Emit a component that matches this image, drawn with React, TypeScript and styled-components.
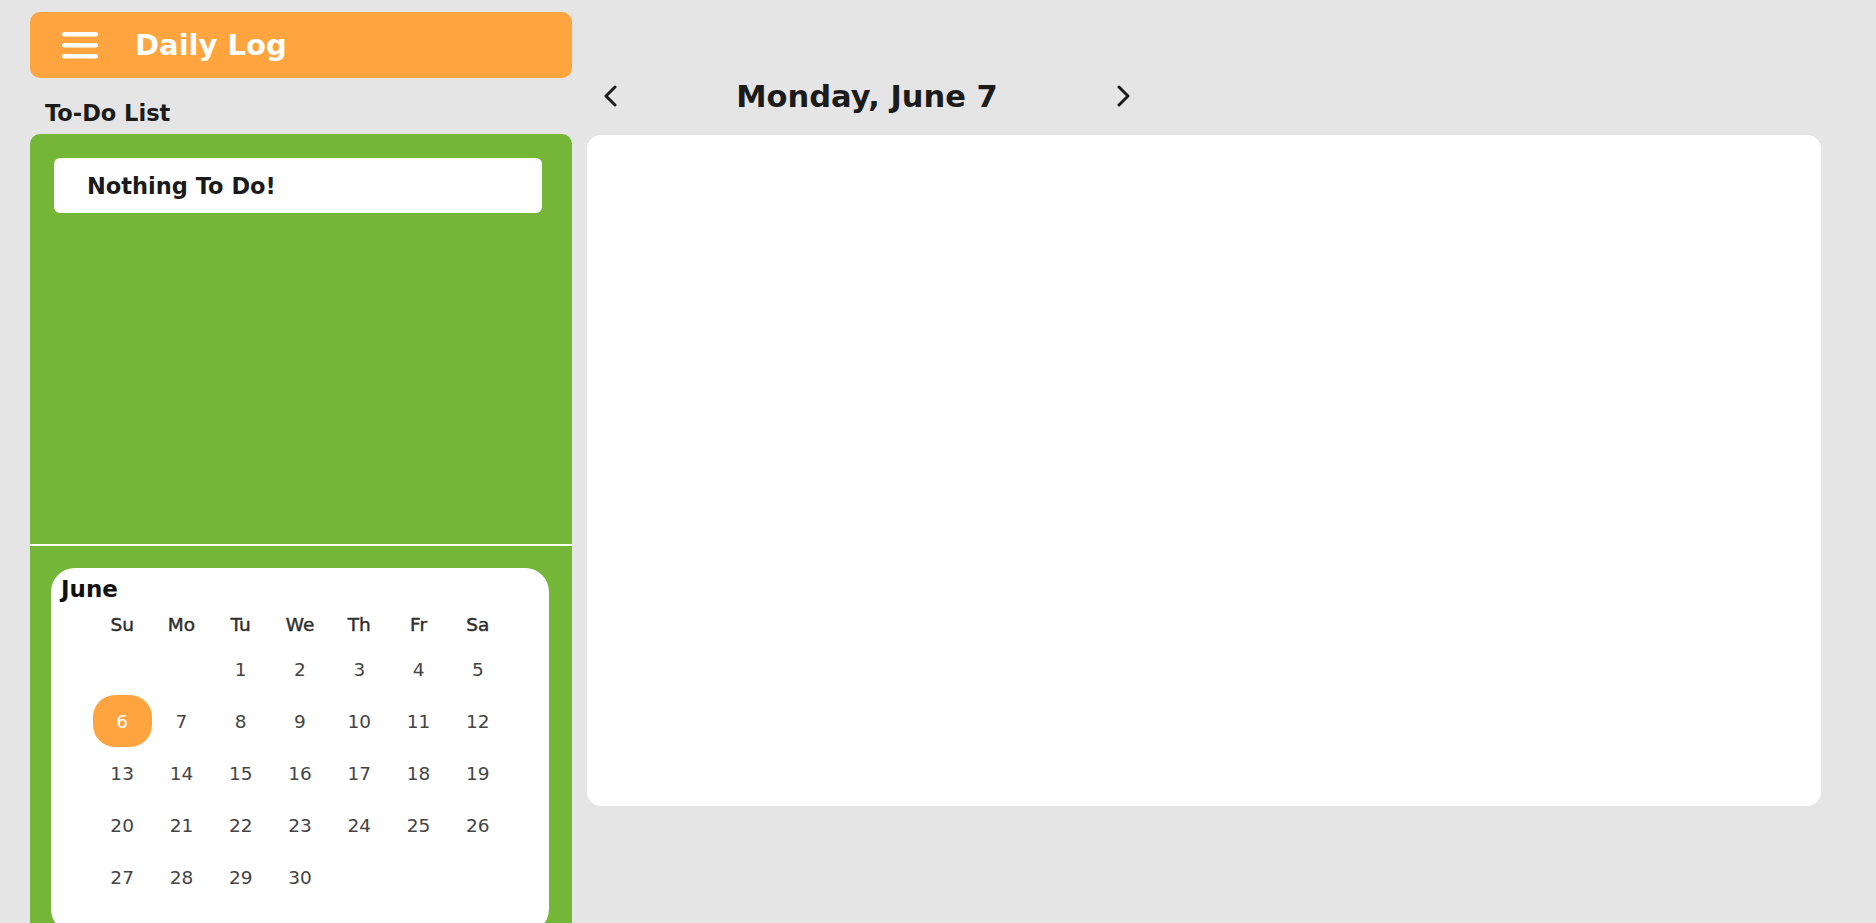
import React from "react";
import styled, { createGlobalStyle } from "styled-components";

const GlobalStyle = createGlobalStyle`
  html, body {
    margin: 0;
    padding: 0;
    background: #e5e5e5;
    font-family: "DejaVu Sans", "Liberation Sans", sans-serif;
    color: #1b1b1b;
    overflow: hidden;
  }
  * { box-sizing: border-box; }
`;

const ORANGE = "#ffa43f";
const GREEN = "#73b638";

const Page = styled.div`
  display: flex;
  gap: 15px;
  height: 100vh;
  padding: 12px 55px 0 30px;
  overflow: hidden;
`;

const LeftColumn = styled.aside`
  width: 542px;
  flex-shrink: 0;
  display: flex;
  flex-direction: column;
`;

const Header = styled.header`
  flex-shrink: 0;
  height: 66px;
  background: ${ORANGE};
  border-radius: 10px;
  display: flex;
  align-items: center;
  padding-left: 32px;
  gap: 37px;
`;

const MenuButton = styled.button`
  border: none;
  background: transparent;
  padding: 0;
  display: flex;
  cursor: pointer;
`;

const AppTitle = styled.h1`
  margin: 0;
  color: #fff;
  font-size: 29px;
  font-weight: 700;
`;

const SectionLabel = styled.h2`
  flex-shrink: 0;
  margin: 0;
  height: 56px;
  padding: 21px 0 0 15px;
  font-size: 22.5px;
  line-height: 28px;
  font-weight: 700;
  color: #1b1b1b;
`;

const GreenPanel = styled.section`
  flex-shrink: 0;
  background: ${GREEN};
  border-radius: 10px 10px 0 0;
  display: flex;
  flex-direction: column;
`;

const TodoArea = styled.div`
  height: 410px;
  padding: 24px 30px 0 24px;
`;

const TodoCard = styled.div`
  height: 55px;
  background: #fff;
  border-radius: 6px;
  display: flex;
  align-items: center;
  padding-left: 33px;
  font-size: 22.5px;
  font-weight: 700;
  color: #1b1b1b;
`;

const Divider = styled.hr`
  margin: 0;
  border: none;
  height: 2px;
  background: #fff;
`;

const CalendarArea = styled.div`
  padding: 22px 23px 20px 21px;
`;

const CalendarCard = styled.div`
  background: #fff;
  border-radius: 24px;
  padding: 6px 0 30px;
`;

const MonthTitle = styled.h3`
  margin: 0 0 1px;
  padding-left: 10px;
  font-size: 23px;
  line-height: 30px;
  font-weight: 700;
  color: #111;
`;

const Grid = styled.div`
  width: 415px;
  margin: 0 auto;
  display: grid;
  grid-template-columns: repeat(7, 1fr);
`;

const WeekDay = styled.div`
  height: 38px;
  display: flex;
  align-items: center;
  justify-content: center;
  font-size: 18.5px;
  font-weight: 400;
  color: #2e2e2e;
  -webkit-text-stroke: 0.45px #2e2e2e;
`;

const Day = styled.div<{ $selected?: boolean }>`
  height: 52px;
  display: flex;
  align-items: center;
  justify-content: center;
  font-size: 18.5px;
  font-weight: 400;
  color: ${(p) => (p.$selected ? "#fff" : "#444")};
  background: ${(p) => (p.$selected ? ORANGE : "transparent")};
  border-radius: 22px;
`;

const RightColumn = styled.main`
  width: 1234px;
  flex-shrink: 0;
  padding-top: 56px;
  display: flex;
  flex-direction: column;
  gap: 11px;
`;

const DateNav = styled.nav`
  width: 560px;
  height: 56px;
  flex-shrink: 0;
  display: flex;
  align-items: center;
  justify-content: space-between;
`;

const NavButton = styled.button`
  width: 48px;
  height: 48px;
  border: none;
  background: transparent;
  padding: 0;
  display: flex;
  align-items: center;
  justify-content: center;
  cursor: pointer;
  color: #1b1b1b;
`;

const DateTitle = styled.h2`
  margin: 0;
  font-size: 30.5px;
  font-weight: 700;
  color: #1b1b1b;
`;

const LogPanel = styled.div`
  height: 671px;
  flex-shrink: 0;
  background: #fff;
  border-radius: 14px;
`;

const Hamburger = () => (
  <svg width="36" height="27" viewBox="0 0 36 27">
    <rect x="0" y="0" width="36" height="4.6" rx="2.3" fill="#fff" />
    <rect x="0" y="11" width="36" height="4.6" rx="2.3" fill="#fff" />
    <rect x="0" y="22" width="36" height="4.6" rx="2.3" fill="#fff" />
  </svg>
);

const Chevron = ({ dir }: { dir: "left" | "right" }) => (
  <svg width="16" height="22" viewBox="0 0 16 22">
    <polyline
      points={dir === "left" ? "12,2 3,11 12,20" : "4,2 13,11 4,20"}
      fill="none"
      stroke="#1b1b1b"
      strokeWidth="3"
      strokeLinecap="round"
      strokeLinejoin="round"
    />
  </svg>
);

const weekDays = ["Su", "Mo", "Tu", "We", "Th", "Fr", "Sa"];
const leading = 2;
const daysInMonth = 30;
const selectedDay = 6;

export default function App() {
  const cells: (number | null)[] = [
    ...Array.from({ length: leading }, () => null),
    ...Array.from({ length: daysInMonth }, (_, i) => i + 1),
  ];
  return (
    <>
      <GlobalStyle />
      <Page>
        <LeftColumn>
          <Header>
            <MenuButton aria-label="menu">
              <Hamburger />
            </MenuButton>
            <AppTitle>Daily Log</AppTitle>
          </Header>
          <SectionLabel>To-Do List</SectionLabel>
          <GreenPanel>
            <TodoArea>
              <TodoCard>Nothing To Do!</TodoCard>
            </TodoArea>
            <Divider />
            <CalendarArea>
              <CalendarCard>
                <MonthTitle>June</MonthTitle>
                <Grid>
                  {weekDays.map((d) => (
                    <WeekDay key={d}>{d}</WeekDay>
                  ))}
                  {cells.map((d, i) => (
                    <Day key={i} $selected={d === selectedDay}>
                      {d ?? ""}
                    </Day>
                  ))}
                </Grid>
              </CalendarCard>
            </CalendarArea>
          </GreenPanel>
        </LeftColumn>
        <RightColumn>
          <DateNav>
            <NavButton aria-label="previous day">
              <Chevron dir="left" />
            </NavButton>
            <DateTitle>Monday, June 7</DateTitle>
            <NavButton aria-label="next day">
              <Chevron dir="right" />
            </NavButton>
          </DateNav>
          <LogPanel />
        </RightColumn>
      </Page>
    </>
  );
}
